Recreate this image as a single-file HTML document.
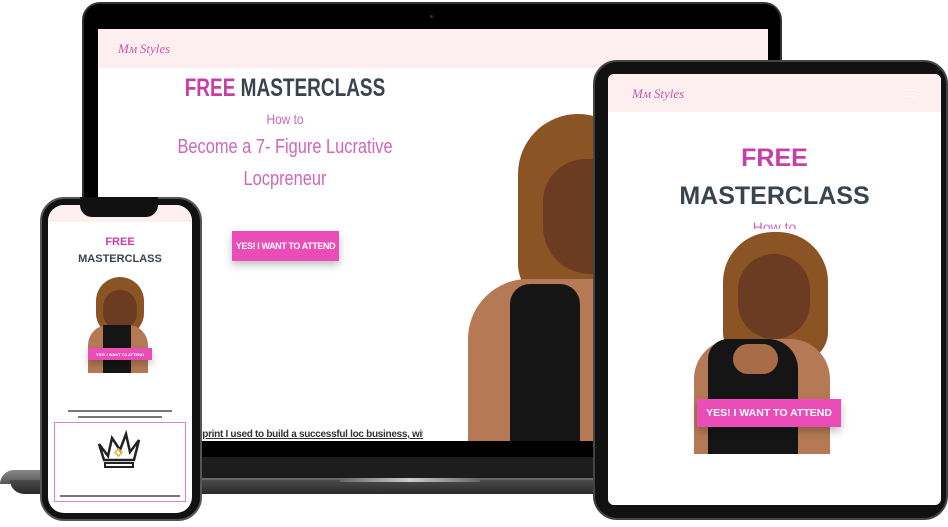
<!DOCTYPE html>
<html><head><meta charset="utf-8"><style>
*{margin:0;padding:0;box-sizing:border-box}
body{width:948px;height:527px;background:#fff;position:relative;overflow:hidden;font-family:"Liberation Sans",sans-serif}
.a{position:absolute}
.c{text-align:center;white-space:nowrap}
.btn{background:#ea4db7;color:#fff;font-weight:bold;display:flex;align-items:center;justify-content:center;box-shadow:0 4px 8px rgba(0,0,0,.25);white-space:nowrap}
</style></head><body>
<!-- laptop base -->
<div class="a" style="left:0;top:470px;width:790px;height:14px;background:linear-gradient(#888,#555);border-radius:30px 0 0 0"></div>
<div class="a" style="left:10px;top:480px;width:780px;height:14px;background:linear-gradient(#4a4a4a,#2a2a2a);border-radius:0 0 30px 30px"></div>
<div class="a" style="left:340px;top:476px;width:140px;height:6px;background:linear-gradient(90deg,#666,#ccc,#666)"></div>
<!-- laptop lid -->
<div class="a" style="left:82px;top:2px;width:700px;height:476px;background:#000;border-radius:18px 18px 0 0;border:2px solid #333"></div>
<div class="a" style="left:84px;top:457px;width:696px;height:21px;background:#1d1d1d"></div>
<div class="a" style="left:98px;top:29px;width:670px;height:412px;background:#fff;overflow:hidden">
 <div class="a" style="left:0;top:0;width:670px;height:39px;background:#fdeeef"></div>
 <div class="a" style="left:20px;top:12px;font-family:'Liberation Serif',serif;font-style:italic;color:#c75aa8;font-size:13px">Mᴍ Styles</div>
 <div class="a c" style="left:37px;top:45px;width:300px;font-size:25px;font-weight:bold;color:#3a4350;transform:scaleX(.76)"><span style="color:#c440a8">FREE</span> MASTERCLASS</div>
 <div class="a c" style="left:87px;top:82px;width:200px;font-size:14px;color:#d166b9;transform:scaleX(.85)">How to</div>
 <div class="a c" style="left:37px;top:107px;width:300px;font-size:20px;color:#d166b9;transform:scaleX(.82)">Become a 7- Figure Lucrative</div>
 <div class="a c" style="left:37px;top:139px;width:300px;font-size:20px;color:#d166b9;transform:scaleX(.82)">Locpreneur</div>
 <div class="a btn" style="left:134px;top:202px;width:107px;height:30px;font-size:9px;letter-spacing:-.4px">YES! I WANT TO ATTEND</div>
 <div class="a" style="left:99px;top:400px;width:226px;overflow:hidden;white-space:nowrap;font-size:10px;font-weight:bold;color:#333;text-decoration:underline;letter-spacing:-.3px">eprint I used to build a successful loc business, without the</div>
 <!-- woman -->
 <div class="a" style="left:420px;top:85px;width:120px;height:190px;background:#8a5424;border-radius:60px 60px 30px 40px"></div>
 <div class="a" style="left:445px;top:130px;width:95px;height:115px;background:#6b3b22;border-radius:45px 40px 50px 50px"></div>
 <div class="a" style="left:370px;top:250px;width:200px;height:170px;background:#b57a55;border-radius:60px 60px 0 0"></div>
 <div class="a" style="left:412px;top:255px;width:70px;height:160px;background:#151515;border-radius:20px 20px 0 0"></div>
</div>
<div class="a" style="left:430px;top:15px;width:3px;height:3px;background:#333;border-radius:50%"></div>
<!-- phone -->
<div class="a" style="left:40px;top:197px;width:162px;height:324px;background:#111;border-radius:24px;border:2px solid #555"></div>
<div class="a" style="left:48px;top:205px;width:144px;height:308px;background:#fff;border-radius:16px;overflow:hidden">
 <div class="a" style="left:0;top:0;width:144px;height:17px;background:#fdeeef"></div>
 <div class="a c" style="left:0;top:31px;width:144px;font-size:11px;font-weight:bold;color:#c440a8">FREE</div>
 <div class="a c" style="left:0;top:48px;width:144px;font-size:11px;font-weight:bold;color:#3a4350">MASTERCLASS</div>
 <div class="a" style="left:48px;top:72px;width:48px;height:60px;background:#8a5424;border-radius:24px"></div>
 <div class="a" style="left:55px;top:85px;width:34px;height:40px;background:#6b3b22;border-radius:17px"></div>
 <div class="a" style="left:40px;top:120px;width:60px;height:48px;background:#b57a55;border-radius:20px 20px 0 0"></div>
 <div class="a" style="left:55px;top:120px;width:28px;height:48px;background:#151515"></div>
 <div class="a btn" style="left:40px;top:143px;width:64px;height:12px;font-size:4px">YES! I WANT TO ATTEND</div>
 <div class="a" style="left:20px;top:205px;width:104px;height:2px;background:#777"></div>
 <div class="a" style="left:30px;top:211px;width:84px;height:2px;background:#777"></div>
 <div class="a" style="left:6px;top:217px;width:132px;height:80px;border:1px solid #e080c8"></div>
 <svg class="a" style="left:48px;top:225px" width="46" height="40" viewBox="0 0 46 40"><path d="M3 14 L12 26 L16 8 L24 20 L30 4 L34 22 L43 10 L38 30 L8 30 Z" fill="none" stroke="#222" stroke-width="2.5"/><rect x="9" y="33" width="28" height="4" fill="none" stroke="#222" stroke-width="2"/><rect x="20" y="20" width="5" height="5" fill="none" stroke="#e8b030" stroke-width="1.5" transform="rotate(45 22.5 22.5)"/></svg>
 <div class="a" style="left:12px;top:290px;width:120px;height:2px;background:#777"></div>
</div>
<div class="a" style="left:80px;top:197px;width:78px;height:20px;background:#111;border-radius:0 0 12px 12px"></div>
<!-- tablet -->
<div class="a" style="left:593px;top:60px;width:355px;height:460px;background:#111;border-radius:24px;border:2px solid #444"></div>
<div class="a" style="left:608px;top:74px;width:333px;height:431px;background:#fff;border-radius:6px;overflow:hidden">
 <div class="a" style="left:0;top:0;width:333px;height:38px;background:#fdeeef"></div>
 <div class="a" style="left:24px;top:12px;font-family:'Liberation Serif',serif;font-style:italic;color:#c75aa8;font-size:13px">Mᴍ Styles</div>
 <div class="a" style="left:296px;top:15px;width:12px;height:8px;border-top:1px solid #fff;border-bottom:1px solid #fff"></div>
 <div class="a c" style="left:0;top:70px;width:333px;font-size:25px;font-weight:bold;color:#c440a8">FREE</div>
 <div class="a c" style="left:0;top:108px;width:333px;font-size:25px;font-weight:bold;color:#3a4350">MASTERCLASS</div>
 <div class="a c" style="left:0;top:145px;width:333px;font-size:14px;color:#d166b9;height:10px;overflow:hidden">How to</div>
 <div class="a" style="left:115px;top:158px;width:105px;height:130px;background:#8a5424;border-radius:50px 50px 30px 30px"></div>
 <div class="a" style="left:130px;top:180px;width:72px;height:85px;background:#6b3b22;border-radius:36px"></div>
 <div class="a" style="left:86px;top:265px;width:136px;height:115px;background:#b57a55;border-radius:40px 40px 0 0"></div>
 <div class="a" style="left:100px;top:265px;width:90px;height:115px;background:#151515;border-radius:20px 30px 0 0"></div>
 <div class="a" style="left:125px;top:270px;width:45px;height:30px;background:#a86c48;border-radius:15px"></div>
 <div class="a btn" style="left:89px;top:325px;width:144px;height:28px;font-size:10.5px">YES! I WANT TO ATTEND</div>
</div>
</body></html>
